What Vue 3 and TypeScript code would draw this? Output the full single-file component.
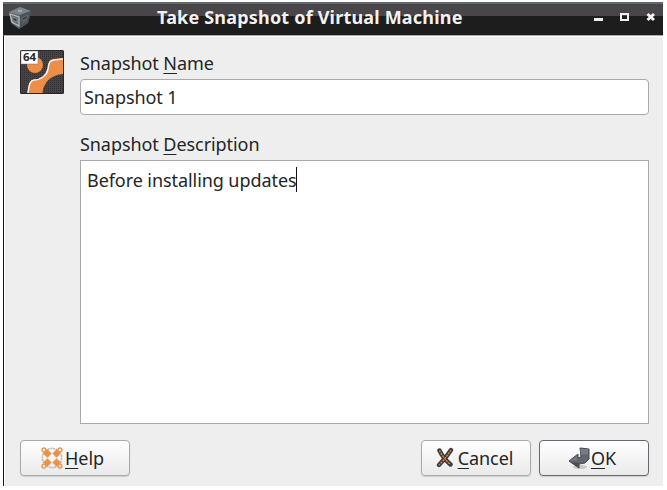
<script setup lang="ts">
const fields = {
  name: 'Snapshot 1',
  description: 'Before installing updates',
}
const lifebuoyAngles: number[] = [45, 135, 225, 315]
</script>

<template>
  <div class="desktop">
    <section class="window" role="dialog" aria-labelledby="title">
      <header class="titlebar">
        <svg class="app-icon" width="24" height="24" viewBox="0 0 24 24">
          <path d="M1 6 12 1 23 5 20 17 11 23 3 17Z" fill="#62686d" />
          <path d="M1 6 12 1 23 5 12 9Z" fill="#7b8288" />
          <path d="M12 9 23 5 20 17 11 23Z" fill="#4b5155" />
          <path d="M2 8 11 11V20L4 16Z" fill="#666c70" stroke="#b9bdc0" stroke-width="1.2" />
          <path d="M5 11 9 13V16L5 14Z" fill="#33373a" stroke="#a8adb1" stroke-width=".6" />
          <path d="m14 12 6-3-1 3-5 3zm0 5 5-3" fill="#33383b" stroke="#666e73" />
          <path d="M10 4h4v2h-4z" fill="#a3a9ad" />
        </svg>
        <h1 id="title">Take Snapshot of Virtual Machine</h1>
        <div class="controls">
          <svg width="9" height="10" viewBox="0 0 9 10"><path d="M0 6h9v3H0z" fill="#eee" /></svg>
          <svg width="9" height="10" viewBox="0 0 9 10"><path d="M1 2h7v6H1z" fill="none" stroke="#eee" stroke-width="2" /></svg>
          <svg width="10" height="10" viewBox="0 0 10 10"><path d="m1.5 2 6.5 6m0-6-6.5 6" stroke="#f4f4f4" stroke-width="3" /></svg>
        </div>
      </header>

      <main class="body">
        <div class="content">
          <svg class="guest-icon" width="44" height="44" viewBox="0 0 44 44">
            <defs>
              <pattern id="grain" width="2" height="2" patternUnits="userSpaceOnUse">
                <path d="M0 0h2v2H0z" fill="#464446" /><path d="M0 0h1v1H0z" fill="#302e30" />
              </pattern>
              <clipPath id="tile"><rect width="44" height="44" rx="1.5" /></clipPath>
            </defs>
            <g clip-path="url(#tile)">
              <path d="M0 0h44v44H0z" fill="url(#grain)" />
              <circle cx="15" cy="15" r="8" fill="#ec8d48" />
              <path d="M7 44C9 39 10 34 11 30Q20 31 26 24C30 19 26 12 32 9L44 8V24C36 24 28 28 25 35Q22 39 23 44Z" fill="#ec8d48" />
              <path d="M8 43C9 37 9 31 14 30C21 30 27 25 28 19C29 13 29 11 34 10L43 9" fill="none" stroke="#f2eeea" stroke-width="1.6" />
              <rect x=".5" y=".5" width="43" height="43" rx="1" fill="none" stroke="#272527" />
              <path d="M1 1h17v13H1z" fill="#fff" stroke="#777" stroke-width=".5" />
              <text x="3" y="10.8" class="badge-text" textLength="13" lengthAdjust="spacingAndGlyphs">64</text>
            </g>
          </svg>

          <div class="form">
            <div class="label"><span>Snapshot <u>N</u>ame</span></div>
            <div class="field name-field"><span>{{ fields.name }}</span></div>
            <div class="label second"><span>Snapshot <u>D</u>escription</span></div>
            <div class="field description-field">
              <span>{{ fields.description }}</span><i class="caret"></i>
            </div>
          </div>
        </div>

        <footer class="actions">
          <button class="button help" type="button">
            <svg class="help-icon" width="24" height="24" viewBox="0 0 24 24">
              <circle cx="12" cy="12" r="9.6" fill="none" stroke="#bbb" stroke-width="1.6" stroke-dasharray="2 .7" />
              <g v-for="angle in lifebuoyAngles" :key="angle" :transform="`rotate(${angle} 12 12)`">
                <circle cx="12" cy="0.6" r="2" fill="#eee" stroke="#ef9145" stroke-width="1.3" />
                <path d="M9 2.5h6V8.5H9z" fill="#ef9145" />
              </g>
            </svg>
            <span class="help-text"><u>H</u>elp</span>
          </button>
          <div class="spacer"></div>
          <button class="button cancel" type="button">
            <svg width="20" height="22" viewBox="0 0 20 22">
              <path d="M4.5 3.5Q8 11 15.5 17.5M16 3Q11 11 4 18" fill="none" stroke="#3c3e42" stroke-width="4.4" stroke-linecap="round" />
              <path d="M4.5 3.5Q8 11 15.5 17.5M16 3Q11 11 4 18" fill="none" stroke="#ed8139" stroke-width="1.3" stroke-dasharray="2 1" />
            </svg>
            <span class="cancel-text"><u>C</u>ancel</span>
          </button>
          <button class="button ok" type="button">
            <svg width="22" height="23" viewBox="0 0 22 23">
              <ellipse cx="12" cy="20" rx="7" ry="2" fill="#c9c9c9" />
              <path d="M12 1 21 2V12L17 16 11 17V21L1 14 10 7V11L13 10Z" fill="#63666d" stroke="#45484e" />
              <path d="M12 2 20 2V7L13 8ZM2 14 9 9V13Z" fill="#777b82" />
              <path d="M2 15 11 16V20Z" fill="#4a4d53" />
            </svg>
            <span class="ok-text"><u>O</u>K</span>
          </button>
        </footer>
      </main>
    </section>
  </div>
</template>

<style>
body { margin: 0; background: #fff; overflow: hidden; }
</style>

<style scoped>
* { box-sizing: border-box; }
.desktop { width: 667px; height: 490px; padding: 2px 4px 4px 3px; background: #fff; font: 18px/24px "Noto Sans", sans-serif; letter-spacing: -.07px; color: #232627; }
.window { width: 660px; height: 484px; display: flex; flex-direction: column; background: #eee; }
.titlebar { height: 33px; display: flex; align-items: center; border-top: 2px solid #626970; background: linear-gradient(#484648 0 12px, #1e1d1e 12px); flex: none; }
.app-icon { margin: -4px 0 0 5px; flex: none; }
h1 { margin: -4px 0 0 125px; width: 307px; flex: none; font-size: 18px; line-height: 25px; font-weight: 700; letter-spacing: .19px; color: #f1f1f1; white-space: nowrap; }
.controls { display: flex; gap: 17px; margin: -5px 7px 0 auto; }
.controls svg { flex: none; }
.body { flex: 1; display: flex; flex-direction: column; padding: 14px 14px 10px 15px; border-left: 1px solid #161616; border-top: 1px solid #aaa; box-shadow: inset 1px 1px #fff; }
.content { display: flex; height: 388px; }
.guest-icon { flex: none; margin-left: .5px; }
.badge-text { font: 700 10px "Noto Sans", sans-serif; fill: #272727; }
.form { margin-left: 16.5px; width: 569px; }
.label { height: 29px; line-height: 26px; white-space: pre; }
.label.second { margin-top: 17px; height: 28px; line-height: 24px; }
u { text-decoration: underline; text-decoration-thickness: 1.4px; text-underline-offset: 3px; }
.field { background: #fff; border: 1px solid #aaa; display: flex; align-items: center; }
.name-field { height: 36px; border-radius: 4px; padding: 0 3px; }
.description-field { height: 264px; align-items: flex-start; padding: 6px; line-height: 27px; }
.caret { width: 1.5px; height: 25px; margin-left: -1px; background: #111; }
.actions { display: flex; height: 36px; margin-top: 2px; }
.button { width: 110px; height: 36px; padding: 0; border: 1px solid #aaa; border-radius: 4px; background: linear-gradient(#fff, #eaeaea); box-shadow: 0 1px 1px #ccc; color: inherit; font: inherit; letter-spacing: -.07px; display: flex; align-items: center; justify-content: center; }
.spacer { flex: 1; }
.help { padding-right: 5px; margin-left: .5px; }
.help-icon { overflow: visible; }
.help-text { margin-left: 1px; }
.ok { margin-left: 8px; padding-right: 4px; border-color: #656a70; }
.ok-text { margin-left: 1px; }
.cancel { padding-right: 4px; }
.cancel svg { margin-right: 3px; }
</style>
